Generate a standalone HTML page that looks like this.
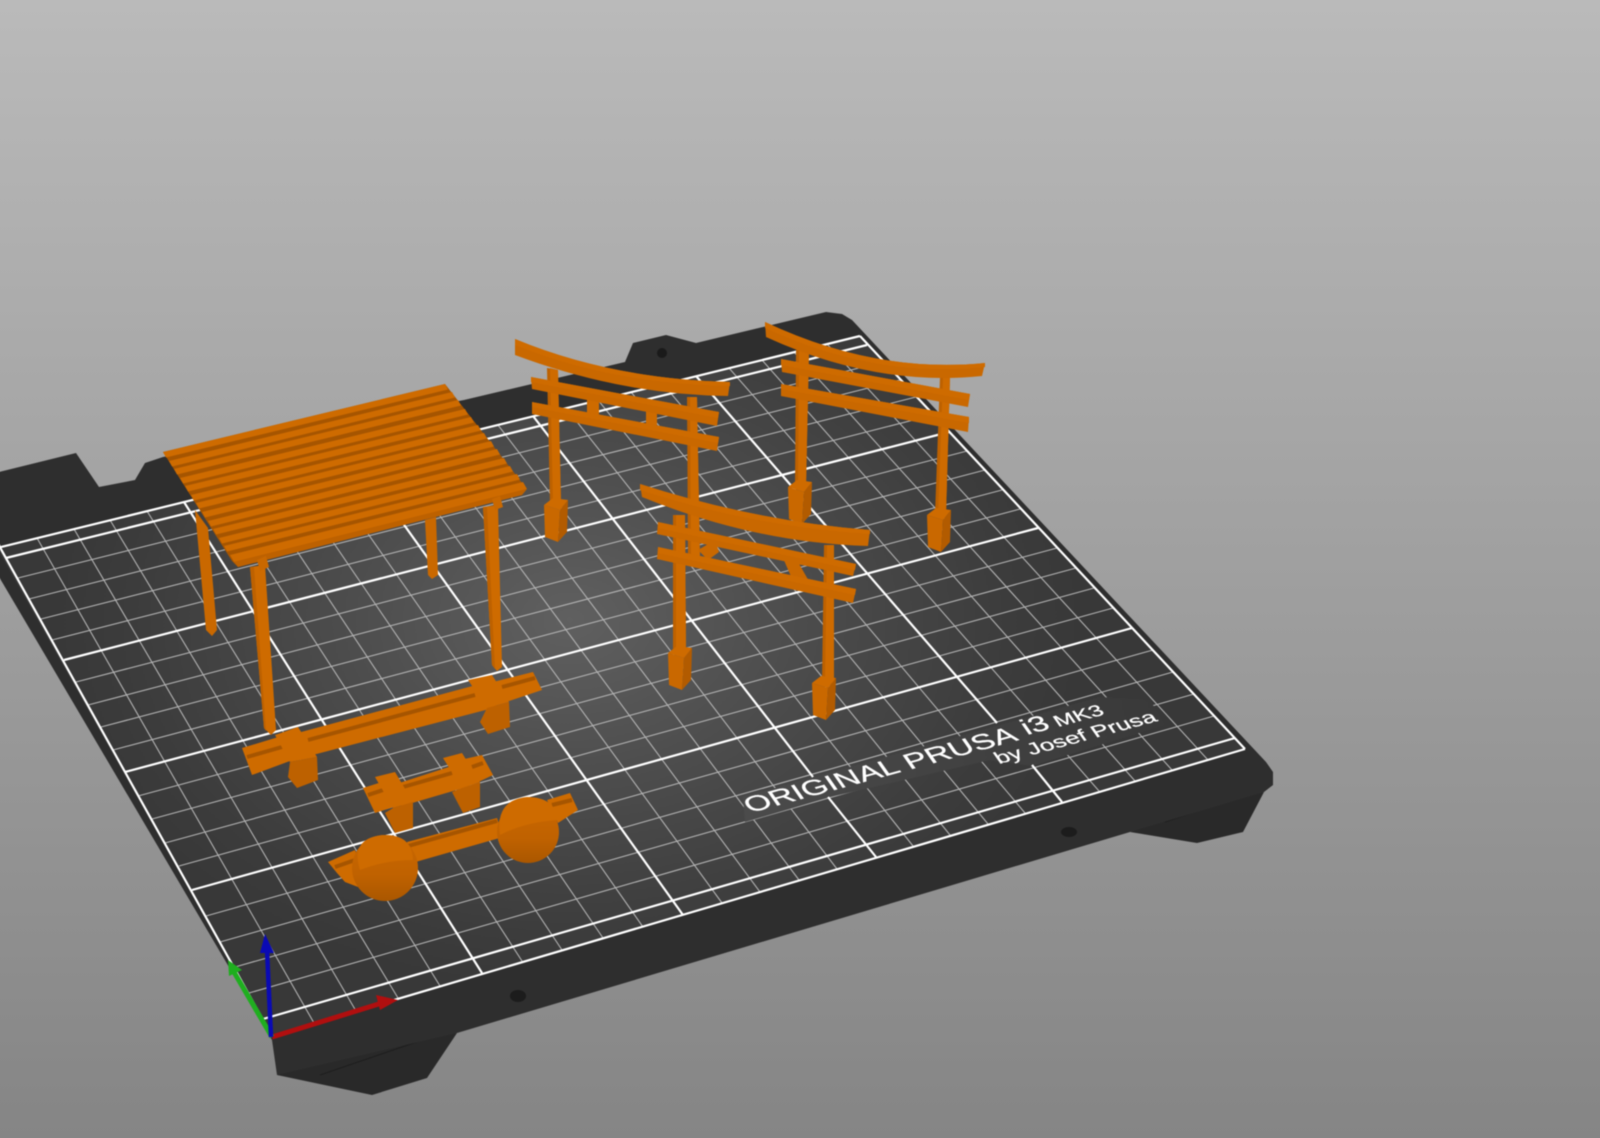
<!DOCTYPE html>
<html><head><meta charset="utf-8"><title>Bed</title>
<style>
html,body{margin:0;padding:0;background:#999;overflow:hidden}
svg{display:block}
.scene{filter:blur(.45px)}
.t{fill:#ce6b00}.s{fill:#bd6100}.d{fill:#b25b00}.m{fill:#c96800}
.maj{stroke:#fff;stroke-width:2.2;fill:none}
.min{stroke:#b2b2b2;stroke-width:1.1;fill:none}
.slit{stroke:#a65500;stroke-width:4;fill:none}
.txt{font-family:"Liberation Sans",sans-serif;fill:#fff;stroke:#fff;stroke-width:.35}
</style></head><body>
<svg width="1600" height="1138" viewBox="0 0 1600 1138" xmlns="http://www.w3.org/2000/svg">
<defs>
<linearGradient id="bg" x1="0" y1="0" x2="0" y2="1"><stop offset="0" stop-color="#bababa"/><stop offset="1" stop-color="#858585"/></linearGradient>
<radialGradient id="gl" gradientUnits="userSpaceOnUse" cx="570" cy="620" r="520" gradientTransform="translate(570 620) scale(1 .72) translate(-570 -620)"><stop offset="0" stop-color="#606060"/><stop offset=".45" stop-color="#4c4c4c"/><stop offset=".85" stop-color="#3c3c3c"/><stop offset="1" stop-color="#383838"/></radialGradient>
<linearGradient id="band" gradientUnits="userSpaceOnUse" x1="743" y1="800" x2="1165" y2="700"><stop offset="0" stop-color="#4b4b4b"/><stop offset=".5" stop-color="#424242"/><stop offset="1" stop-color="#393939"/></linearGradient>
<linearGradient id="sp" x1="0" y1="0" x2="0" y2="1"><stop offset="0" stop-color="#c96700"/><stop offset=".6" stop-color="#c06200"/><stop offset="1" stop-color="#aa5700"/></linearGradient>
<g id="base">
<path class="m" d="M0,0L16,5L14,37L1,32Z"/>
<path class="d" d="M16,5L24,-5L23,27L14,37Z"/>
<path class="t" d="M0,0L9,-7L24,-5L16,5Z"/>
</g>
</defs>
<rect width="1600" height="1138" fill="url(#bg)"/>
<g class="scene">

<!-- feet -->
<path d="M277,1075L372,1095L427,1078L457,1033L300,1050Z" fill="#292929"/>
<path d="M320,1075L443,1033" stroke="#1e1e1e" stroke-width="1" fill="none"/>
<path d="M1130,832L1197,843L1243,832L1264,792L1200,805Z" fill="#292929"/>
<path d="M1165,822L1260,790" stroke="#1e1e1e" stroke-width="1" fill="none"/>

<!-- plate -->
<path d="M-5,473L76,453L99,487L135,480L145,463L163,457L464,400L625,362L633,343L666,335L696,343L826,312L842,314L852,320L1266,762L1273,772L1273,785L1264,792L1130,832L457,1033L277,1075L272,1040L-5,570Z" fill="#2e2e2e"/>
<path d="M-3,548L860,336L1245,749L272,1036Z" fill="url(#gl)"/>

<!-- minor short lines -->
<path class="min" d="M249,993L1214,716M235,967L1194,694M220,942L1173,672M206,916L1153,650
M179,866L1113,608M165,843L1094,588M152,819L1076,568M138,796L1057,548
M113,750L1020,509M101,727L1002,490M88,705L985,470M76,682L967,451
M52,640L933,415M41,619L916,397M29,599L900,380M18,578L883,362"/>
<!-- minor long lines -->
<path class="min" d="M314,1023L37,538M356,1011L74,529M398,998L110,520M440,986L147,511
M522,961L219,493M562,950L253,485M603,938L288,476M643,927L322,468
M722,903L392,450M760,892L427,442M799,880L463,433M837,869L498,425
M913,846L566,408M950,835L598,400M988,824L631,392M1025,813L663,384
M1099,791L729,368M1135,781L762,360M1172,770L794,352M1208,760L827,344"/>
<!-- text band -->
<path d="M743,797L1100,697L1150,700L1165,725L1032,766L990,760L830,797L745,822Z" fill="url(#band)"/>
<!-- major lines -->
<path class="maj" d="M272,1036L1245,749M263,1019L1235,738M192,890L1132,628M125,772L1038,528M64,660L949,432M6,558L867,345M-3,548L860,336
M272,1036L-3,542M1245,749L860,336
M482,973L184,502M683,915L357,459
M876,857L828,797M813,777L533,416
M1062,802L1032,765M997,723L696,376"/>

<!-- holes -->
<ellipse cx="662" cy="353" rx="5" ry="5" fill="#1a1a1a"/>
<ellipse cx="1069" cy="832" rx="8" ry="5" fill="#1c1c1c"/>
<ellipse cx="518" cy="996" rx="8" ry="6" fill="#1c1c1c"/>

<!-- axes -->
<path d="M272,1037L382,1003" stroke="#b00f0f" stroke-width="5" fill="none"/>
<path d="M376,995L398,1000L380,1010Z" fill="#b00f0f"/>
<path d="M272,1037L234,972" stroke="#1fae1f" stroke-width="5" fill="none"/>
<path d="M228,960L242,970L229,976Z" fill="#1fae1f"/>
<path d="M271,1037L267,950" stroke="#0a0ab4" stroke-width="4.5" fill="none"/>
<path d="M265,934L274,953L260,953Z" fill="#0a0ab4"/>

<!-- text -->
<text class="txt" font-size="33" transform="matrix(.965 -.262 .42 .6 750 813)">ORIGINAL PRUSA</text>
<text class="txt" font-size="33" transform="matrix(.965 -.262 .42 .6 1027 735)">i3</text>
<text class="txt" font-size="24" transform="matrix(.965 -.262 .42 .6 1058 727)">MK3</text>
<text class="txt" font-size="25" transform="matrix(.965 -.262 .42 .6 999 764)">by Josef Prusa</text>

<!-- roof back posts -->
<path class="m" d="M195,510L208,528L217,630L212,636L206,630Z"/>
<path class="m" d="M425,520L436,517L438,575L432,579L428,575Z"/>
<!-- roof -->
<path fill="#a65500" d="M163,452L445,384L526,488L522,495L238,567L232,561Z"/>
<g class="t">
<path d="M163,452L445,384L448,389.5L166,457.5Z"/>
<path d="M169,461L452,392L455,397.5L172,466.5Z"/>
<path d="M174,469L458,400L461,405.5L177,474.5Z"/>
<path d="M180,478L465,409L468,414.5L183,483.5Z"/>
<path d="M185,486L471,417L474,422.5L188,491.5Z"/>
<path d="M191,495L478,425L481,430.5L194,500.5Z"/>
<path d="M196,503L484,433L487,438.5L199,508.5Z"/>
<path d="M202,512L491,441L494,446.5L205,517.5Z"/>
<path d="M208,521L497,449L500,454.5L211,526.5Z"/>
<path d="M213,529L504,458L507,463.5L216,534.5Z"/>
<path d="M219,538L510,466L513,471.5L222,543.5Z"/>
<path d="M224,546L517,474L520,479.5L227,551.5Z"/>
<path d="M230,555L523,482L527,489L234,562Z"/>
</g>
<path class="s" d="M234,562L527,489L522,495L238,567Z"/>
<!-- front posts -->
<path class="t" d="M250,567L265,565L276,730L271,735L264,728Z"/>
<path class="s" d="M250,567L254,567L266,731L264,728Z"/>
<path class="t" d="M483,507L498,505L502,667L497,671L492,665Z"/>
<path class="s" d="M483,507L487,507L495,669L492,665Z"/>
<path class="m" d="M257,560L266,556L269,567L260,571Z"/>
<path class="m" d="M492,499L500,496L503,507L495,510Z"/>

<!-- Torii 1 -->
<g>
<path class="s" d="M547,368L558,370L561,503L550,505Z"/>
<path class="t" d="M550,368L558,370L561,503L553,505Z"/>
<path class="s" d="M687,397L697,397L700,560L688,560Z"/>
<path class="t" d="M690,397L697,397L700,560L691,560Z"/>
<use href="#base" x="544" y="505"/>
<path class="t" d="M587,395L599,397L599,424L587,421Z"/>
<path class="t" d="M646,408L657,410L657,438L646,436Z"/>
<path class="m" d="M531,377L719,412L717,426L532,389Z"/>
<path class="t" d="M531,377L719,412L718,418L531,382Z"/>
<path class="m" d="M532,402L719,437L717,451L532,414Z"/>
<path class="t" d="M532,402L719,437L718,443L532,407Z"/>
<path class="m" d="M515,339Q611,379 730,382L728,396Q622,395 515,355Z"/>
<path class="t" d="M515,339Q611,379 730,382L730,386Q611,384 515,345Z"/>
</g>

<!-- Torii 2 -->
<g>
<path class="s" d="M796,350L809,350L806,487L795,487Z"/>
<path class="t" d="M799,350L809,350L806,487L798,487Z"/>
<path class="s" d="M940,377L950,377L946,515L935,515Z"/>
<path class="t" d="M943,377L950,377L946,515L938,515Z"/>
<use href="#base" x="788" y="487"/>
<use href="#base" x="927" y="515"/>
<path class="m" d="M781,359L970,394L968,407L782,372Z"/>
<path class="t" d="M781,359L970,394L969,400L781,365Z"/>
<path class="m" d="M781,384L969,417L968,432L781,396Z"/>
<path class="t" d="M781,384L969,417L969,423L781,389Z"/>
<path class="m" d="M765,322Q875,374 985,363L982,376Q875,387 766,337Z"/>
<path class="t" d="M765,322Q875,374 985,363L985,367Q875,379 765,328Z"/>
</g>

<!-- Torii 3 -->
<g>
<path class="s" d="M673,515L685,515L686,653L673,653Z"/>
<path class="t" d="M676,515L685,515L686,653L676,653Z"/>
<path class="s" d="M824,545L834,545L834,683L822,683Z"/>
<path class="t" d="M827,545L834,545L834,683L825,683Z"/>
<use href="#base" x="668" y="653"/>
<use href="#base" x="812" y="683"/>
<path class="m" d="M698,550L715,540L719,552L708,560Z"/>
<path class="m" d="M783,558L798,562L810,583L793,581Z"/>
<path class="m" d="M658,522L856,564L853,576L657,534Z"/>
<path class="t" d="M658,522L856,564L855,570L658,528Z"/>
<path class="m" d="M658,547L856,589L853,603L657,559Z"/>
<path class="t" d="M658,547L856,589L855,595L658,553Z"/>
<path class="m" d="M640,484Q755,521 870,530L868,546Q755,543 642,497Z"/>
<path class="t" d="M640,484Q755,521 870,530L870,534Q755,527 640,490Z"/>
</g>

<!-- Bench 1 -->
<g>
<path class="t" d="M290,735L480,684L497,707L305,757Z"/>
<path class="slit" d="M308,740L475,695"/>
<path class="t" d="M242,748L285,735L298,758L252,775Z"/>
<path class="slit" d="M247,757L282,747"/>
<path class="t" d="M275,735L298,727L317,757L290,762Z"/>
<path class="s" d="M290,762L317,757L318,780L297,788L288,777Z"/>
<path class="t" d="M485,684L533,672L542,690L497,705Z"/>
<path class="slit" d="M502,687L535,678"/>
<path class="t" d="M468,680L492,675L509,702L487,708Z"/>
<path class="s" d="M487,708L509,702L510,727L488,734L480,722Z"/>
</g>

<!-- Bench 2 -->
<g>
<path class="t" d="M390,786L455,765L470,786L402,806Z"/>
<path class="slit" d="M403,787L452,773"/>
<path class="t" d="M363,788L385,781L400,805L375,813Z"/>
<path class="slit" stroke-width="3" d="M368,795L383,790"/>
<path class="t" d="M375,777L395,772L413,802L393,808Z"/>
<path class="s" d="M393,808L413,802L413,828L395,833L385,813Z"/>
<path class="t" d="M460,760L482,755L493,775L472,785Z"/>
<path class="slit" stroke-width="3" d="M472,767L483,763"/>
<path class="t" d="M443,758L462,753L480,782L462,788Z"/>
<path class="s" d="M462,788L480,782L480,807L463,813L452,792Z"/>
</g>

<!-- Bench 3 -->
<g>
<path class="t" d="M328,862L355,850L363,870L358,887L345,882L337,873Z"/>
<path class="slit" d="M335,867L355,860"/>
<path class="t" d="M547,800L570,793L578,810L558,823Z"/>
<path class="slit" d="M552,805L572,800"/>
<path class="t" d="M407,842L497,818L503,837L412,863Z"/>
<path class="slit" d="M408,846L497,821"/>
<circle cx="385" cy="868" r="33" fill="url(#sp)"/>
<path class="t" d="M360,870Q350,838 383,835Q412,834 413,860Q385,860 360,870Z"/>
<circle cx="528" cy="832" r="31" fill="url(#sp)"/>
<path class="t" d="M500,835Q495,800 527,797Q555,797 558,820Q525,822 500,835Z"/>
</g>
</g>
</svg>
</body></html>
